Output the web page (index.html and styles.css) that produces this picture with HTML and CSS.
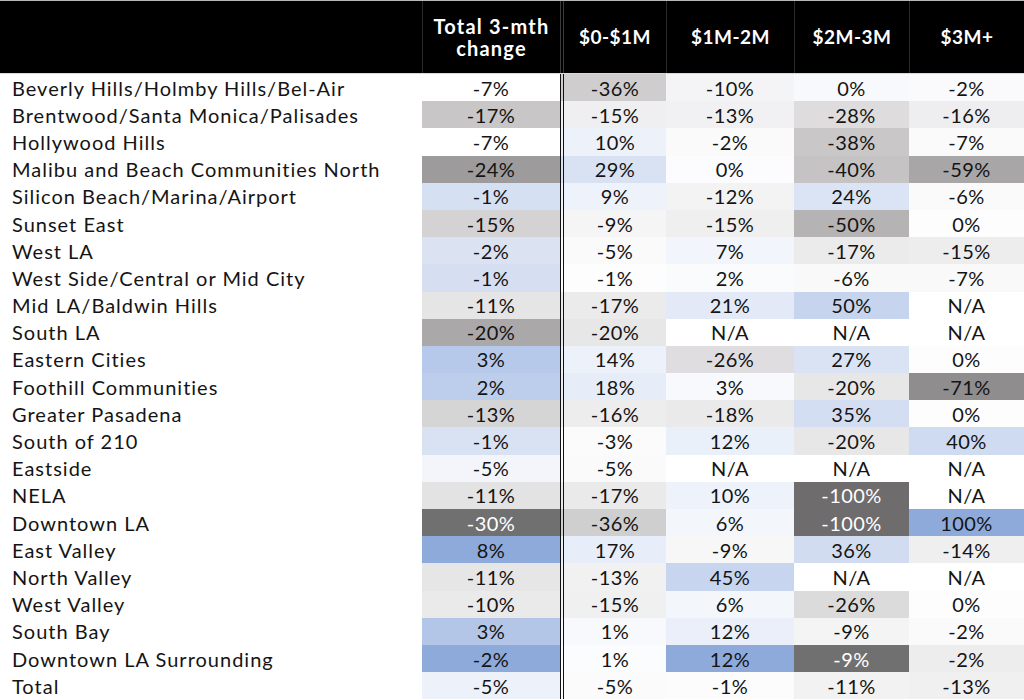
FILE: index.html
```html
<!DOCTYPE html>
<html>
<head>
<meta charset="utf-8">
<link rel="stylesheet" href="styles.css">
</head>
<body>
<div class="sheet">
  <div class="row head">
    <div class="c lab"></div>
    <div class="c tot">Total 3-mth<br>change</div>
    <div class="c b1">$0-$1M</div>
    <div class="c">$1M-2M</div>
    <div class="c">$2M-3M</div>
    <div class="c">$3M+</div>
  </div>
  <div class="row"><div class="c lab">Beverly Hills/Holmby Hills/Bel-Air</div><div class="c tot" style="background:#ffffff">-7%</div><div class="c b1" style="background:#cfcdce">-36%</div><div class="c" style="background:#f4f4f6">-10%</div><div class="c" style="background:#f8f9fd">0%</div><div class="c" style="background:#fafafc">-2%</div></div>
  <div class="row"><div class="c lab">Brentwood/Santa Monica/Palisades</div><div class="c tot" style="background:#c8c6c7">-17%</div><div class="c b1" style="background:#efeff1">-15%</div><div class="c" style="background:#f1f1f3">-13%</div><div class="c" style="background:#dedcdd">-28%</div><div class="c" style="background:#eeedef">-16%</div></div>
  <div class="row"><div class="c lab">Hollywood Hills</div><div class="c tot" style="background:#ffffff">-7%</div><div class="c b1" style="background:#edf1f9">10%</div><div class="c" style="background:#fafafb">-2%</div><div class="c" style="background:#c9c7c8">-38%</div><div class="c" style="background:#fafafb">-7%</div></div>
  <div class="row"><div class="c lab">Malibu and Beach Communities North</div><div class="c tot" style="background:#9d9b9c">-24%</div><div class="c b1" style="background:#d9e2f3">29%</div><div class="c" style="background:#fcfcfe">0%</div><div class="c" style="background:#c5c3c4">-40%</div><div class="c" style="background:#a8a6a7">-59%</div></div>
  <div class="row"><div class="c lab">Silicon Beach/Marina/Airport</div><div class="c tot" style="background:#d6e0f3">-1%</div><div class="c b1" style="background:#eef2fa">9%</div><div class="c" style="background:#f3f3f4">-12%</div><div class="c" style="background:#dbe4f4">24%</div><div class="c" style="background:#fafafb">-6%</div></div>
  <div class="row"><div class="c lab">Sunset East</div><div class="c tot" style="background:#d4d2d3">-15%</div><div class="c b1" style="background:#f5f5f6">-9%</div><div class="c" style="background:#efeff0">-15%</div><div class="c" style="background:#b5b3b4">-50%</div><div class="c" style="background:#fdfdfe">0%</div></div>
  <div class="row"><div class="c lab">West LA</div><div class="c tot" style="background:#dbe3f3">-2%</div><div class="c b1" style="background:#fafafb">-5%</div><div class="c" style="background:#f2f5fb">7%</div><div class="c" style="background:#ecebec">-17%</div><div class="c" style="background:#eeedee">-15%</div></div>
  <div class="row"><div class="c lab">West Side/Central or Mid City</div><div class="c tot" style="background:#d6dff1">-1%</div><div class="c b1" style="background:#fdfdfe">-1%</div><div class="c" style="background:#fafbfd">2%</div><div class="c" style="background:#f9f9fa">-6%</div><div class="c" style="background:#f9f9fa">-7%</div></div>
  <div class="row"><div class="c lab">Mid LA/Baldwin Hills</div><div class="c tot" style="background:#e6e5e6">-11%</div><div class="c b1" style="background:#ecebec">-17%</div><div class="c" style="background:#e3e9f6">21%</div><div class="c" style="background:#c6d4ee">50%</div><div class="c" style="background:#ffffff">N/A</div></div>
  <div class="row"><div class="c lab">South LA</div><div class="c tot" style="background:#aaa8a9">-20%</div><div class="c b1" style="background:#e8e7e8">-20%</div><div class="c" style="background:#ffffff">N/A</div><div class="c" style="background:#ffffff">N/A</div><div class="c" style="background:#ffffff">N/A</div></div>
  <div class="row"><div class="c lab">Eastern Cities</div><div class="c tot" style="background:#b6c9ea">3%</div><div class="c b1" style="background:#ecf1fa">14%</div><div class="c" style="background:#dfdddf">-26%</div><div class="c" style="background:#dae3f4">27%</div><div class="c" style="background:#fdfdfe">0%</div></div>
  <div class="row"><div class="c lab">Foothill Communities</div><div class="c tot" style="background:#bcceeb">2%</div><div class="c b1" style="background:#e7edf8">18%</div><div class="c" style="background:#f8f9fd">3%</div><div class="c" style="background:#e8e7e8">-20%</div><div class="c" style="background:#8f8d8e">-71%</div></div>
  <div class="row"><div class="c lab">Greater Pasadena</div><div class="c tot" style="background:#d6d5d6">-13%</div><div class="c b1" style="background:#eeedee">-16%</div><div class="c" style="background:#ebeaeb">-18%</div><div class="c" style="background:#d4def2">35%</div><div class="c" style="background:#fdfdfe">0%</div></div>
  <div class="row"><div class="c lab">South of 210</div><div class="c tot" style="background:#d9e2f3">-1%</div><div class="c b1" style="background:#fbfbfc">-3%</div><div class="c" style="background:#eaf0f9">12%</div><div class="c" style="background:#e8e7e8">-20%</div><div class="c" style="background:#cfdbf0">40%</div></div>
  <div class="row"><div class="c lab">Eastside</div><div class="c tot" style="background:#f3f5fb">-5%</div><div class="c b1" style="background:#fafafb">-5%</div><div class="c" style="background:#ffffff">N/A</div><div class="c" style="background:#ffffff">N/A</div><div class="c" style="background:#ffffff">N/A</div></div>
  <div class="row"><div class="c lab">NELA</div><div class="c tot" style="background:#e4e3e4">-11%</div><div class="c b1" style="background:#ebeaeb">-17%</div><div class="c" style="background:#eef2fa">10%</div><div class="c dark" style="background:#6e6c6d">-100%</div><div class="c" style="background:#ffffff">N/A</div></div>
  <div class="row"><div class="c lab">Downtown LA</div><div class="c tot dark" style="background:#717071">-30%</div><div class="c b1" style="background:#d0cfd0">-36%</div><div class="c" style="background:#f3f6fb">6%</div><div class="c dark" style="background:#6e6c6d">-100%</div><div class="c" style="background:#8eaadb">100%</div></div>
  <div class="row"><div class="c lab">East Valley</div><div class="c tot" style="background:#8eaadb">8%</div><div class="c b1" style="background:#e8eef9">17%</div><div class="c" style="background:#f7f7f8">-9%</div><div class="c" style="background:#d1dcf1">36%</div><div class="c" style="background:#efeff0">-14%</div></div>
  <div class="row"><div class="c lab">North Valley</div><div class="c tot" style="background:#e7e6e7">-11%</div><div class="c b1" style="background:#f1f1f2">-13%</div><div class="c" style="background:#c8d5ef">45%</div><div class="c" style="background:#ffffff">N/A</div><div class="c" style="background:#ffffff">N/A</div></div>
  <div class="row"><div class="c lab">West Valley</div><div class="c tot" style="background:#ebeaeb">-10%</div><div class="c b1" style="background:#f0f0f1">-15%</div><div class="c" style="background:#f3f6fb">6%</div><div class="c" style="background:#dcdbdc">-26%</div><div class="c" style="background:#fdfdfe">0%</div></div>
  <div class="row"><div class="c lab">South Bay</div><div class="c tot" style="background:#b3c6e8">3%</div><div class="c b1" style="background:#f8f9fd">1%</div><div class="c" style="background:#eaeff9">12%</div><div class="c" style="background:#f4f4f5">-9%</div><div class="c" style="background:#fafafb">-2%</div></div>
  <div class="row"><div class="c lab">Downtown LA Surrounding</div><div class="c tot" style="background:#8eaadb">-2%</div><div class="c b1" style="background:#fbfcfe">1%</div><div class="c" style="background:#8eaadb">12%</div><div class="c dark" style="background:#717071">-9%</div><div class="c" style="background:#eeedee">-2%</div></div>
  <div class="row"><div class="c lab">Total</div><div class="c tot" style="background:#edf1f9">-5%</div><div class="c b1" style="background:#fbfbfc">-5%</div><div class="c" style="background:#fcfcfd">-1%</div><div class="c" style="background:#f2f2f3">-11%</div><div class="c" style="background:#f0f0f1">-13%</div></div>
</div>
</body>
</html>
```
FILE: styles.css
```css
html, body {
  margin: 0;
  padding: 0;
  background: #ffffff;
}
.sheet {
  width: 1024px;
  height: 700px;
  overflow: hidden;
  font-family: Lato, "Noto Sans", sans-serif;
  color: #141414;
}
.row {
  display: grid;
  grid-template-columns: 422px 138px 106px 128px 115px 115px;
  height: 27.2px;
  font-size: 20px;
}
.c {
  display: flex;
  align-items: center;
  justify-content: center;
  white-space: nowrap;
  letter-spacing: 0.4px;
}
.c.lab {
  justify-content: flex-start;
  padding-left: 12px;
  background: #ffffff;
  letter-spacing: 1px;
}
.c.b1 {
  border-left: 4px double #111111;
}
.c.dark {
  color: #ffffff;
}
.row.head {
  height: 72px;
  border-top: 1px solid #b8b8b8;
  border-bottom: 1px solid #d3dae6;
  background: #000000;
  color: #ffffff;
  font-weight: 700;
  font-size: 19px;
}
.row.head .c {
  border-left: 1px solid #2a2a2a;
  text-align: center;
  line-height: 22px;
  letter-spacing: 0.5px;
}
.row.head .c.tot {
  font-size: 20px;
  letter-spacing: 1.2px;
}
.row.head .c.lab {
  border-left: none;
  background: #000000;
}
.row.head .c.b1 {
  border-left: 4px double #3a3a3a;
}
```
